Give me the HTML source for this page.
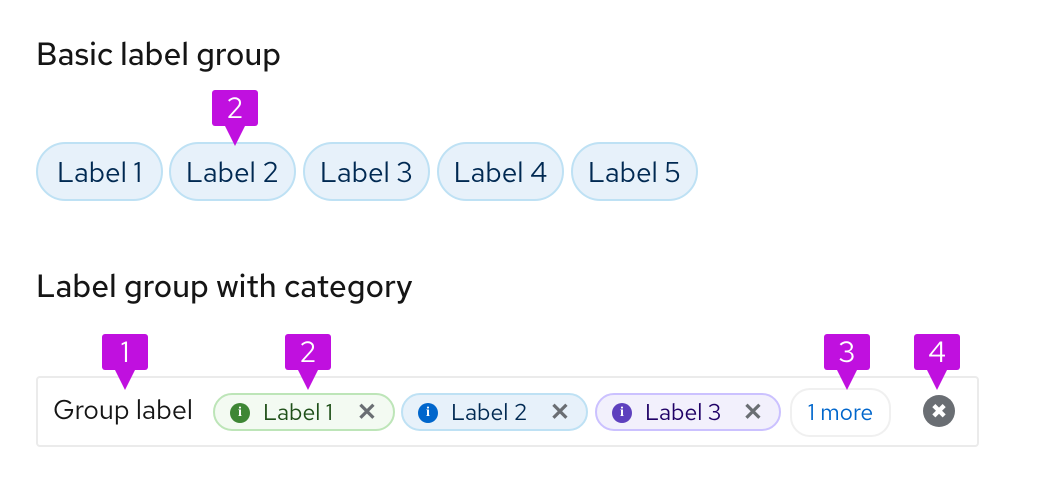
<!DOCTYPE html>
<html><head><style>
body{margin:0;width:1064px;height:478px;background:#fff;font-family:"Red Hat Text","Liberation Sans",sans-serif;position:relative;overflow:hidden}
.a{position:absolute}
h2{position:absolute;margin:0;font-weight:500;font-size:31.5px;color:#151515;left:36px}
.chip{position:absolute;top:142px;height:55px;width:123px;border:2px solid #bee1f4;background:#e7f1fa;border-radius:30px;color:#002952;font-size:28px;line-height:57px;text-align:center}
.mk{position:absolute;width:46px;height:36px;background:#c010df;border-radius:3px;color:#fff;font-size:29px;text-align:center;line-height:36px}
.mk:after{content:"";position:absolute;left:12px;top:34px;border-left:11px solid transparent;border-right:11px solid transparent;border-top:22px solid #c010df}
.lb{position:absolute;top:393px;height:34px;border-radius:20px;border:2px solid;font-size:23px;line-height:36px}
.ic{position:absolute;left:15px;top:8px;width:20px;height:20px;border-radius:50%;color:#fff;font:bold 14px/20px "Liberation Serif",serif;text-align:center}
.x{position:absolute;right:16px;top:0;color:#6a6e73;font-size:24px;font-weight:bold}
.t{position:absolute;left:48px}
</style></head><body>
<h2 style="top:33px">Basic label group</h2>
<h2 style="top:265px">Label group with category</h2>
<div class="chip" style="left:36px">Label 1</div>
<div class="chip" style="left:169px">Label 2</div>
<div class="chip" style="left:303px">Label 3</div>
<div class="chip" style="left:437px">Label 4</div>
<div class="chip" style="left:571px">Label 5</div>
<div class="mk" style="left:212px;top:90px">2</div>

<div class="a" style="left:36px;top:376px;width:939px;height:67px;border:2px solid #ebebeb;border-radius:4px"></div>
<div class="a" style="left:53px;top:393px;font-size:27px;color:#151515">Group label</div>
<div class="lb" style="left:213px;width:178px;background:#f3faf2;border-color:#bde5b8;color:#1e4f18"><span class="ic" style="background:#3e8635">i</span><span class="t">Label 1</span><span class="x">✕</span></div>
<div class="lb" style="left:401px;width:183px;background:#e7f1fa;border-color:#bee1f4;color:#002952"><span class="ic" style="background:#0066cc">i</span><span class="t">Label 2</span><span class="x">✕</span></div>
<div class="lb" style="left:595px;width:182px;background:#f2f0fc;border-color:#cbc1ff;color:#1f0066"><span class="ic" style="background:#5e40be">i</span><span class="t">Label 3</span><span class="x">✕</span></div>
<div class="lb" style="left:790px;top:388px;width:97px;height:45px;line-height:47px;border-color:#f0f0f0;color:#0066cc;text-align:center">1 more</div>
<div class="a" style="left:923px;top:395px;width:32px;height:32px;border-radius:50%;background:#6a6e73;color:#fff;font:bold 20px/32px 'DejaVu Sans',sans-serif;text-align:center">✖</div>
<div class="mk" style="left:102px;top:334px">1</div>
<div class="mk" style="left:285px;top:334px">2</div>
<div class="mk" style="left:824px;top:334px">3</div>
<div class="mk" style="left:914px;top:334px">4</div>
</body></html>
